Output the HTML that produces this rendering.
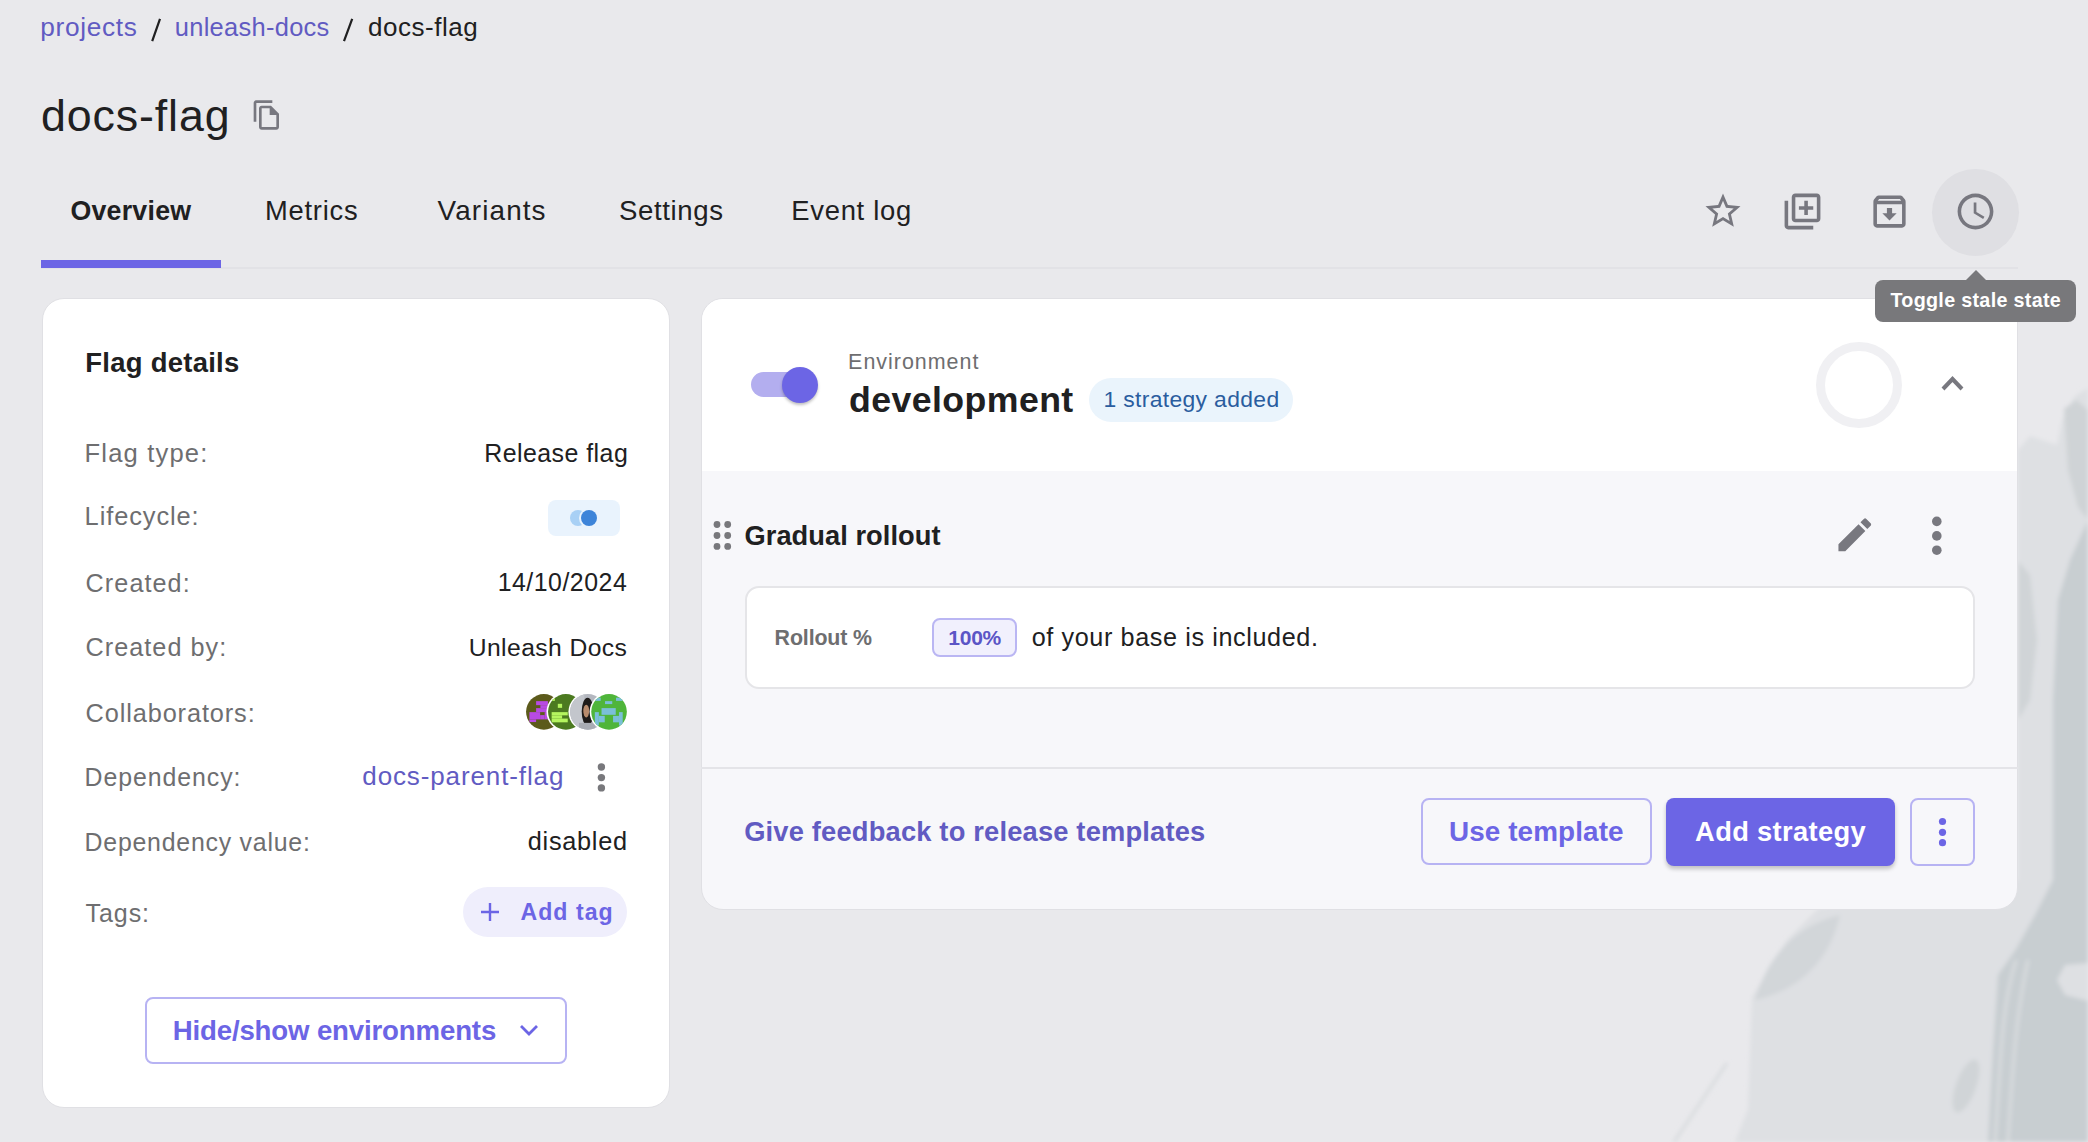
<!DOCTYPE html>
<html><head><meta charset="utf-8">
<style>
*{box-sizing:border-box;margin:0;padding:0}
html,body{width:2088px;height:1142px;overflow:hidden}
body{background:#e9e9ec;font-family:"Liberation Sans",sans-serif;color:#202021;position:relative}
.t{position:absolute;white-space:nowrap;line-height:1}
.a{position:absolute}
</style></head><body>

<svg class="a" style="left:0;top:0" width="2088" height="1142" viewBox="0 0 2088 1142">
  <defs><filter id="bl" x="-10%" y="-10%" width="120%" height="120%"><feGaussianBlur stdDeviation="2"/></filter></defs>
  <g filter="url(#bl)">
  <path fill="#dee0e3" d="M2018 450 L2030 436 L2057 445 L2062 420 L2075 396 L2088 388 L2088 1142 L1735 1142 L1748 1109 L1752 997 L1787 940 L1819 908 L1900 900 L2018 880 Z"/>
  <path fill="#d2d6d9" d="M1755 1000 C1770 950 1800 925 1840 915 C1830 960 1800 990 1755 1000 Z"/>
  <ellipse cx="1966" cy="1086" rx="10" ry="28" transform="rotate(20 1966 1086)" fill="#d0d4d7"/>
  <path fill="#cfd3d6" d="M2064 409 L2076 400 L2088 410 L2088 520 L2078 507 L2068 470 Z"/>
  <path fill="#d0d4d7" d="M2018 561 L2030 575 L2037 640 L2030 700 L2018 720 Z"/>
  <path fill="#c8ced1" d="M2088 520 L2070 560 L2058 600 L2053 700 L2053 880 L2035 915 L2016 949 L1998 975 L1993 1050 L1988 1142 L2088 1142 L2088 1001 L2065 995 L2057 980 L2065 965 L2088 963 Z"/>
  <path d="M2016 960 C2000 1010 2000 1080 1995 1142 M2028 960 C2015 1020 2012 1080 2008 1142" stroke="#d9dcdf" stroke-width="3" fill="none"/>
  <path d="M1727 1063 L1674 1142" stroke="#d8dbde" stroke-width="3" fill="none"/>
  </g>
</svg>

<svg class="a" style="left:0;top:0" width="400" height="50" viewBox="0 0 400 50"><path d="M160 18.8L152.2 41.1M352.2 18.8L344 41.1" stroke="#202021" stroke-width="2.2"/></svg>
<!-- tabs underline + divider -->
<div class="a" style="left:41px;top:267px;width:1977px;height:2px;background:#e2e2e6"></div>
<div class="a" style="left:41px;top:260px;width:180px;height:8px;background:#6c65e5"></div>

<!-- title copy icon -->
<svg class="a" style="left:251px;top:99px" width="32" height="32" viewBox="0 0 24 24"><path fill="#77777f" d="M16 1H4c-1.1 0-2 .9-2 2v14h2V3h12V1zm-1 4H8c-1.1 0-2 .9-2 2v14c0 1.1.9 2 2 2h11c1.1 0 2-.9 2-2V11l-6-6zM8 21V7h6v5h5v9H8z"/></svg>

<!-- header icons -->
<svg class="a" style="left:1702px;top:190px" width="42" height="42" viewBox="0 0 24 24"><path fill="#77777f" d="M22 9.24l-7.19-.62L12 2 9.19 8.63 2 9.24l5.46 4.73L5.82 21 12 17.27 18.18 21l-1.63-7.03L22 9.24zM12 15.4l-3.76 2.27 1-4.28-3.32-2.88 4.38-.38L12 6.1l1.71 4.04 4.38.38-3.32 2.88 1 4.28L12 15.4z"/></svg>
<svg class="a" style="left:1781px;top:190px" width="43" height="43" viewBox="0 0 24 24"><path fill="#77777f" d="M4 6H2v14c0 1.1.9 2 2 2h14v-2H4V6zm16-4H8c-1.1 0-2 .9-2 2v12c0 1.1.9 2 2 2h12c1.1 0 2-.9 2-2V4c0-1.1-.9-2-2-2zm0 14H8V4h12v12zm-7-2h2v-3h3V9h-3V6h-2v3h-3v2h3z"/></svg>
<svg class="a" style="left:1868px;top:190px" width="43" height="43" viewBox="0 0 24 24"><path fill="#77777f" d="M20.54 5.23l-1.39-1.68C18.88 3.21 18.47 3 18 3H6c-.47 0-.88.21-1.16.55L3.46 5.23C3.17 5.57 3 6.02 3 6.5V19c0 1.1.9 2 2 2h14c1.1 0 2-.9 2-2V6.5c0-.48-.17-.93-.46-1.27zM6.24 5h11.52l.81.97H5.44l.8-.97zM5 19V8h14v11H5zm8.45-9h-2.9v3H8l4 4 4-4h-2.55z"/></svg>
<div class="a" style="left:1932px;top:168.5px;width:87px;height:87px;border-radius:50%;background:#dfdfe3"></div>
<svg class="a" style="left:1954px;top:190px" width="43" height="43" viewBox="0 0 24 24"><path fill="#77777f" d="M11.99 2C6.47 2 2 6.48 2 12s4.47 10 9.99 10C17.52 22 22 17.52 22 12S17.52 2 11.99 2zM12 20c-4.42 0-8-3.58-8-8s3.58-8 8-8 8 3.58 8 8-3.58 8-8 8zm.5-13H11v6l5.25 3.15.75-1.23-4.5-2.67z"/></svg>

<!-- left card -->
<div class="a" style="left:42px;top:298px;width:628px;height:810px;background:#fff;border-radius:22px;border:1px solid #e0e0e4"></div>
<div class="a" style="left:548px;top:500px;width:72px;height:36px;border-radius:8px;background:#e9f3fd"></div>
<svg class="a" style="left:560px;top:500px" width="50" height="36" viewBox="0 0 50 36">
  <circle cx="18" cy="18" r="8" fill="#a8d0f5"/>
  <circle cx="29" cy="18" r="10" fill="#e9f3fd"/>
  <circle cx="29" cy="18" r="8" fill="#3d84d9"/>
</svg>
<!-- avatars -->
<svg class="a" style="left:520px;top:688px" width="112" height="48" viewBox="0 0 2088 895">
  <defs>
    <clipPath id="c1"><circle cx="445" cy="445" r="332"/></clipPath>
    <clipPath id="c2"><circle cx="855" cy="445" r="332"/></clipPath>
    <clipPath id="c3"><circle cx="1265" cy="445" r="332"/></clipPath>
    <clipPath id="c4"><circle cx="1660" cy="445" r="332"/></clipPath>
  </defs>
  <g clip-path="url(#c1)"><rect x="0" y="0" width="900" height="895" fill="#5c5a1b"/>
    <g fill="#b84ae3"><rect x="300" y="245" width="220" height="75"/><rect x="380" y="320" width="140" height="55"/><rect x="300" y="375" width="220" height="75"/><rect x="175" y="450" width="200" height="135"/><rect x="460" y="450" width="60" height="135"/><rect x="375" y="505" width="85" height="80"/><rect x="175" y="585" width="125" height="50"/></g></g>
  <circle cx="855" cy="445" r="362" fill="#fff"/>
  <g clip-path="url(#c2)"><rect x="400" y="0" width="900" height="895" fill="#4c7a20"/>
    <g fill="#b5f55f"><rect x="705" y="295" width="80" height="75"/><rect x="590" y="450" width="300" height="60"/><rect x="590" y="510" width="195" height="60"/><rect x="590" y="570" width="300" height="70"/><rect x="580" y="190" width="70" height="50"/></g></g>
  <circle cx="1265" cy="445" r="362" fill="#fff"/>
  <g clip-path="url(#c3)"><rect x="800" y="0" width="900" height="895" fill="#b4b7bf"/>
    <rect x="900" y="0" width="300" height="895" fill="#c3c6cc"/>
    <ellipse cx="1260" cy="440" rx="110" ry="260" fill="#1e1b19"/>
    <ellipse cx="1235" cy="430" rx="55" ry="120" fill="#b88b6c"/>
    <rect x="1100" y="650" width="300" height="250" fill="#a9acb3"/></g>
  <circle cx="1660" cy="445" r="362" fill="#fff"/>
  <g clip-path="url(#c4)"><rect x="1200" y="0" width="900" height="895" fill="#4fb53a"/>
    <g fill="#7bbfd8"><rect x="1400" y="180" width="105" height="60"/><rect x="1790" y="180" width="120" height="60"/><rect x="1585" y="245" width="135" height="55"/><rect x="1520" y="375" width="265" height="125"/><rect x="1395" y="450" width="75" height="250"/><rect x="1470" y="520" width="110" height="120"/><rect x="1845" y="450" width="70" height="250"/><rect x="1735" y="520" width="110" height="120"/></g></g>
</svg>
<!-- dependency kebab -->
<svg class="a" style="left:590px;top:757px" width="24" height="40" viewBox="0 0 24 40">
  <circle cx="11.4" cy="10" r="3.7" fill="#78787c"/><circle cx="11.4" cy="20.6" r="3.7" fill="#78787c"/><circle cx="11.4" cy="30.9" r="3.7" fill="#78787c"/>
</svg>
<!-- add tag -->
<div class="a" style="left:463px;top:887px;width:164px;height:50px;border-radius:25px;background:#efeefc"></div>
<svg class="a" style="left:478px;top:900px" width="24" height="24" viewBox="0 0 24 24"><path d="M3 12h18M12 3v18" stroke="#6c65e5" stroke-width="2.4" fill="none"/></svg>
<!-- hide/show -->
<div class="a" style="left:145px;top:997px;width:422px;height:67px;border-radius:8px;border:2px solid #b7b3f3"></div>
<svg class="a" style="left:516px;top:1018px" width="26" height="24" viewBox="0 0 26 24"><path d="M5 8l8 8 8-8" stroke="#6c65e5" stroke-width="2.8" fill="none"/></svg>

<!-- right card -->
<div class="a" style="left:701px;top:298px;width:1317px;height:612px;background:#f7f7fa;border-radius:22px;overflow:hidden;border:1px solid #e0e0e4">
  <div class="a" style="left:0;top:0;width:1317px;height:172px;background:#fff"></div>
</div>
<!-- toggle -->
<div class="a" style="left:751px;top:372px;width:62px;height:25px;border-radius:12.5px;background:#b3aeef"></div>
<div class="a" style="left:782px;top:367px;width:36px;height:36px;border-radius:50%;background:#6c65e5;box-shadow:0 2px 3px rgba(0,0,0,0.25)"></div>
<!-- badge -->
<div class="a" style="left:1089px;top:378px;width:204px;height:44px;border-radius:22px;background:#eaf4fc"></div>
<!-- spinner + chevron -->
<div class="a" style="left:1816px;top:342px;width:86px;height:86px;border-radius:50%;border:9px solid #f0f0f3"></div>
<svg class="a" style="left:1932px;top:364px" width="40" height="40" viewBox="0 0 40 40"><path d="M11 25l9.5-10 9.5 10" stroke="#78787f" stroke-width="4" fill="none"/></svg>
<!-- drag dots -->
<svg class="a" style="left:710px;top:517px" width="26" height="38" viewBox="0 0 26 38">
  <g fill="#78787c"><circle cx="7" cy="7.5" r="3.4"/><circle cx="17.7" cy="7.5" r="3.4"/><circle cx="7" cy="18.5" r="3.4"/><circle cx="17.7" cy="18.5" r="3.4"/><circle cx="7" cy="29.4" r="3.4"/><circle cx="17.7" cy="29.4" r="3.4"/></g>
</svg>
<!-- pencil -->
<svg class="a" style="left:1833.4px;top:513.4px" width="43.6" height="43.6" viewBox="0 0 24 24"><path fill="#78787f" d="M3 17.25V21h3.75L17.81 9.94l-3.75-3.75L3 17.25zM20.71 7.04c.39-.39.39-1.02 0-1.41l-2.34-2.34a.9959.9959 0 0 0-1.41 0l-1.83 1.83 3.75 3.75 1.83-1.83z"/></svg>
<!-- strategy kebab -->
<svg class="a" style="left:1920px;top:510px" width="34" height="52" viewBox="0 0 34 52">
  <g fill="#78787f"><circle cx="16.8" cy="11.4" r="4.8"/><circle cx="16.8" cy="25.9" r="4.8"/><circle cx="16.8" cy="40.2" r="4.8"/></g>
</svg>
<!-- inner box -->
<div class="a" style="left:744.5px;top:586px;width:1230px;height:103px;border-radius:14px;border:2px solid #e5e5e8;background:#fff"></div>
<div class="a" style="left:932px;top:618px;width:85px;height:39px;border-radius:8px;border:2px solid #bab6f3;background:#f1f0fd"></div>
<!-- footer -->
<div class="a" style="left:701px;top:767px;width:1317px;height:2px;background:#e4e4e8"></div>
<div class="a" style="left:1421px;top:798px;width:231px;height:67px;border-radius:8px;border:2px solid #b7b3f3"></div>
<div class="a" style="left:1666px;top:798px;width:229px;height:68px;border-radius:8px;background:#6c65e5;box-shadow:0 3px 4px rgba(0,0,0,0.22)"></div>
<div class="a" style="left:1910px;top:798px;width:65px;height:68px;border-radius:8px;border:2px solid #b7b3f3"></div>
<svg class="a" style="left:1930px;top:812px" width="25" height="40" viewBox="0 0 25 40">
  <g fill="#6c65e5"><circle cx="12.5" cy="9.5" r="3.6"/><circle cx="12.5" cy="20.3" r="3.6"/><circle cx="12.5" cy="30.7" r="3.6"/></g>
</svg>

<div class="t" style="left:40.3px;top:14.0px;font-size:26.25px;letter-spacing:0.671px;color:#615bc2">projects</div>
<div class="t" style="left:174.8px;top:15.0px;font-size:25.44px;letter-spacing:0.291px;color:#615bc2">unleash-docs</div>
<div class="t" style="left:368.0px;top:14.0px;font-size:26.01px;letter-spacing:0.525px;color:#202021">docs-flag</div>
<div class="t" style="left:40.9px;top:93.0px;font-size:44.75px;letter-spacing:0.887px;color:#202021">docs-flag</div>
<div class="t" style="left:70.4px;top:198.0px;font-size:26.74px;letter-spacing:0.257px;color:#202021;font-weight:bold">Overview</div>
<div class="t" style="left:265.0px;top:197.0px;font-size:27.33px;letter-spacing:0.750px;color:#202021">Metrics</div>
<div class="t" style="left:437.6px;top:197.0px;font-size:27.86px;letter-spacing:1.114px;color:#202021">Variants</div>
<div class="t" style="left:618.9px;top:197.0px;font-size:27.58px;letter-spacing:0.629px;color:#202021">Settings</div>
<div class="t" style="left:791.3px;top:197.0px;font-size:27.41px;letter-spacing:0.713px;color:#202021">Event log</div>
<div class="t" style="left:85.3px;top:349.0px;font-size:27.45px;letter-spacing:0.273px;color:#202021;font-weight:bold">Flag details</div>
<div class="t" style="left:84.6px;top:441.0px;font-size:25.59px;letter-spacing:1.156px;color:#6e6e70">Flag type:</div>
<div class="t" style="left:84.6px;top:504.0px;font-size:25.45px;letter-spacing:0.889px;color:#6e6e70">Lifecycle:</div>
<div class="t" style="left:85.6px;top:571.0px;font-size:25.16px;letter-spacing:1.086px;color:#6e6e70">Created:</div>
<div class="t" style="left:85.6px;top:635.0px;font-size:25.23px;letter-spacing:1.020px;color:#6e6e70">Created by:</div>
<div class="t" style="left:85.6px;top:701.0px;font-size:25.33px;letter-spacing:0.877px;color:#6e6e70">Collaborators:</div>
<div class="t" style="left:84.6px;top:765.0px;font-size:24.87px;letter-spacing:0.940px;color:#6e6e70">Dependency:</div>
<div class="t" style="left:84.6px;top:830.0px;font-size:24.87px;letter-spacing:0.775px;color:#6e6e70">Dependency value:</div>
<div class="t" style="left:85.6px;top:901.0px;font-size:25.02px;letter-spacing:0.900px;color:#6e6e70">Tags:</div>
<div class="t" style="left:484.2px;top:441.0px;font-size:24.91px;letter-spacing:0.464px;color:#202021">Release flag</div>
<div class="t" style="left:497.7px;top:570.0px;font-size:24.86px;letter-spacing:0.511px;color:#202021">14/10/2024</div>
<div class="t" style="left:468.7px;top:636.0px;font-size:24.69px;letter-spacing:0.418px;color:#202021">Unleash Docs</div>
<div class="t" style="left:362.3px;top:763.0px;font-size:26.03px;letter-spacing:0.873px;color:#615bc2">docs-parent-flag</div>
<div class="t" style="left:527.8px;top:829.0px;font-size:25.33px;letter-spacing:0.700px;color:#202021">disabled</div>
<div class="t" style="left:520.5px;top:901.0px;font-size:23.12px;letter-spacing:1.033px;color:#6c65e5;font-weight:bold">Add tag</div>
<div class="t" style="left:172.7px;top:1017.0px;font-size:27.63px;letter-spacing:-0.162px;color:#6c65e5;font-weight:bold">Hide/show environments</div>
<div class="t" style="left:848.1px;top:352.0px;font-size:21.46px;letter-spacing:0.990px;color:#6e6e70">Environment</div>
<div class="t" style="left:849.0px;top:383.0px;font-size:35.67px;letter-spacing:0.430px;color:#202021;font-weight:bold">development</div>
<div class="t" style="left:1103.4px;top:388.0px;font-size:22.89px;letter-spacing:0.353px;color:#2a5d9f">1 strategy added</div>
<div class="t" style="left:744.5px;top:522.0px;font-size:27.25px;letter-spacing:0.050px;color:#202021;font-weight:bold">Gradual rollout</div>
<div class="t" style="left:774.6px;top:628.0px;font-size:21.37px;letter-spacing:-0.125px;color:#6e6e70;font-weight:bold">Rollout %</div>
<div class="t" style="left:948.2px;top:627.0px;font-size:21.05px;letter-spacing:-0.233px;color:#5b55c6;font-weight:bold">100%</div>
<div class="t" style="left:1031.7px;top:625.0px;font-size:25.2px;letter-spacing:0.608px;color:#202021">of your base is included.</div>
<div class="t" style="left:744.2px;top:818.0px;font-size:27.32px;letter-spacing:0.170px;color:#615bc2;font-weight:bold">Give feedback to release templates</div>
<div class="t" style="left:1448.9px;top:818.0px;font-size:27.87px;letter-spacing:0.118px;color:#6c65e5;font-weight:bold">Use template</div>
<div class="t" style="left:1695.1px;top:818.0px;font-size:27.32px;letter-spacing:0.327px;color:#ffffff;font-weight:bold">Add strategy</div>

<!-- tooltip (on top) -->
<svg class="a" style="left:1875px;top:269px" width="201" height="53" viewBox="0 0 201 53">
  <path d="M91 11 L101 1 L111 11 Z" fill="#78787b"/>
  <rect x="0" y="11" width="201" height="42" rx="8" fill="#78787b"/>
</svg>

<div class="t" style="left:1890.4px;top:291.0px;font-size:19.73px;letter-spacing:0.312px;color:#ffffff;font-weight:bold">Toggle stale state</div>
</body></html>
